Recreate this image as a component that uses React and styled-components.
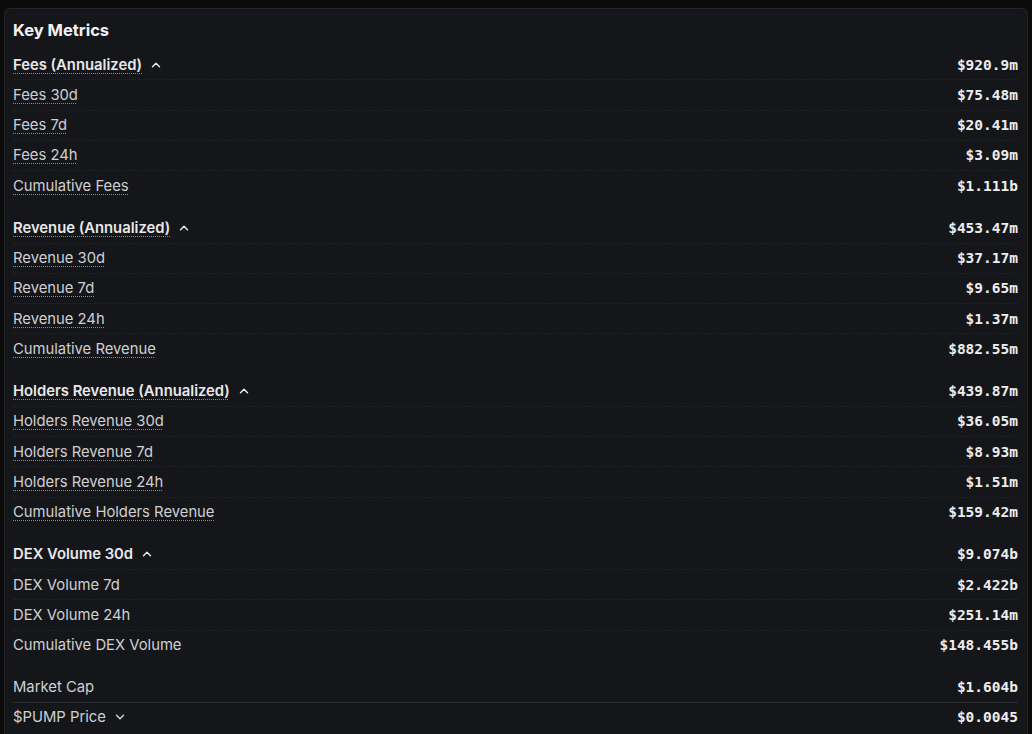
import React from 'react';
import styled, { createGlobalStyle } from 'styled-components';
import { ChevronUp, ChevronDown } from 'lucide-react';

const GlobalStyle = createGlobalStyle`
  html, body {
    margin: 0;
    background: #0b0b0c;
  }
  body {
    padding: 8px 4px 0 4px;
    font-family: Inter, "Noto Sans", sans-serif;
  }
`;

const Card = styled.section`
  background: #151619;
  border: 1px solid #232428;
  border-bottom: none;
  border-radius: 6px 6px 0 0;
  padding: 11px 9px 0 8px;
  min-height: 740px;
  box-sizing: border-box;
`;

const Title = styled.h2`
  margin: 0 0 10px;
  font-size: 16.5px;
  line-height: 20px;
  font-weight: 700;
  color: #f2f2f3;
`;

const Group = styled.div`
  display: flex;
  flex-direction: column;
  margin-bottom: 12px;
`;

const Row = styled.div`
  display: flex;
  align-items: center;
  justify-content: space-between;
  height: ${p => (p.$solid ? '30px' : '30.25px')};
  box-sizing: border-box;
  border-bottom: 1px ${p => (p.$solid ? 'solid #2c2d31' : 'dashed #202125')};
  &:last-child {
    border-bottom-color: transparent;
  }
`;

const Label = styled.span`
  display: inline-flex;
  align-items: center;
  gap: 7px;
  font-size: 14.8px;
  color: ${p => (p.$head ? '#e8e8ea' : '#cfd0d4')};
  font-weight: ${p => (p.$head ? 600 : 400)};
`;

const LabelText = styled.span`
  text-decoration: ${p => (p.$dotted ? 'underline dotted #8a8b90' : 'none')};
  text-underline-offset: 3px;
  text-decoration-thickness: 1px;
`;

const Value = styled.span`
  font-family: "DejaVu Sans Mono", "Liberation Mono", monospace;
  font-weight: 700;
  font-size: 14.5px;
  color: #ededee;
`;

const groups = [
  {
    dotted: true,
    rows: [
      ['Fees (Annualized)', '$920.9m', 'up'],
      ['Fees 30d', '$75.48m'],
      ['Fees 7d', '$20.41m'],
      ['Fees 24h', '$3.09m'],
      ['Cumulative Fees', '$1.111b'],
    ],
  },
  {
    dotted: true,
    rows: [
      ['Revenue (Annualized)', '$453.47m', 'up'],
      ['Revenue 30d', '$37.17m'],
      ['Revenue 7d', '$9.65m'],
      ['Revenue 24h', '$1.37m'],
      ['Cumulative Revenue', '$882.55m'],
    ],
  },
  {
    dotted: true,
    rows: [
      ['Holders Revenue (Annualized)', '$439.87m', 'up'],
      ['Holders Revenue 30d', '$36.05m'],
      ['Holders Revenue 7d', '$8.93m'],
      ['Holders Revenue 24h', '$1.51m'],
      ['Cumulative Holders Revenue', '$159.42m'],
    ],
  },
  {
    dotted: false,
    rows: [
      ['DEX Volume 30d', '$9.074b', 'up'],
      ['DEX Volume 7d', '$2.422b'],
      ['DEX Volume 24h', '$251.14m'],
      ['Cumulative DEX Volume', '$148.455b'],
    ],
  },
  {
    dotted: false,
    solid: true,
    rows: [
      ['Market Cap', '$1.604b'],
      ['$PUMP Price', '$0.0045', 'down'],
    ],
  },
];

export default function App() {
  return (
    <>
      <GlobalStyle />
      <Card>
        <Title>Key Metrics</Title>
        {groups.map((g, gi) => (
          <Group key={gi}>
            {g.rows.map(([label, value, icon]) => (
              <Row key={label} $solid={g.solid}>
                <Label $head={icon === 'up'}>
                  <LabelText $dotted={g.dotted}>{label}</LabelText>
                  {icon === 'up' && <ChevronUp size={14} strokeWidth={2.5} />}
                  {icon === 'down' && <ChevronDown size={14} strokeWidth={2.5} />}
                </Label>
                <Value>{value}</Value>
              </Row>
            ))}
          </Group>
        ))}
      </Card>
    </>
  );
}
